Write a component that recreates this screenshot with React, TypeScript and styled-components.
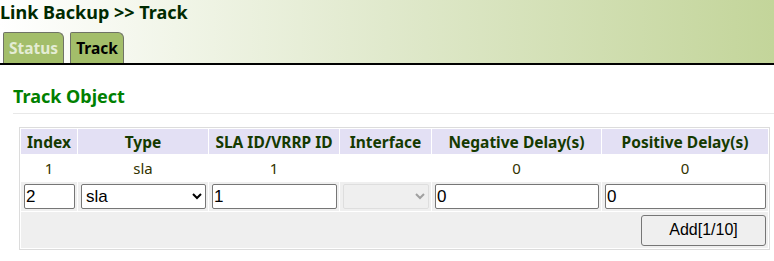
import styled, { createGlobalStyle } from 'styled-components';

const GlobalStyle = createGlobalStyle`
  body {
    margin: 0;
    background: #fff;
    font-family: 'Noto Sans', 'DejaVu Sans', sans-serif;
  }
`;

const columns = [
  { title: 'Index', width: 56 },
  { title: 'Type', width: 130 },
  { title: 'SLA ID/VRRP ID', width: 130 },
  { title: 'Interface', width: 91 },
  { title: 'Negative Delay(s)', width: 169 },
  { title: 'Positive Delay(s)', width: undefined },
];

const rows = [{ index: '1', type: 'sla', slaId: '1', iface: '', neg: '0', pos: '0' }];

const App = () => {
  return (
    <>
      <GlobalStyle />
      <Header>
        <PageTitle>Link Backup &gt;&gt; Track</PageTitle>
        <Tabs>
          <Tab>Status</Tab>
          <Tab active>Track</Tab>
        </Tabs>
      </Header>
      <Content>
        <SectionTitle>Track Object</SectionTitle>
        <Box>
          <Table>
            <colgroup>
              {columns.map((c) => (
                <col key={c.title} style={c.width ? { width: c.width } : undefined} />
              ))}
            </colgroup>
            <thead>
              <tr>
                {columns.map((c) => (
                  <Th key={c.title}>{c.title}</Th>
                ))}
              </tr>
            </thead>
            <tbody>
              {rows.map((r) => (
                <tr key={r.index}>
                  <Td>{r.index}</Td>
                  <Td>{r.type}</Td>
                  <Td>{r.slaId}</Td>
                  <Td>{r.iface}</Td>
                  <Td>{r.neg}</Td>
                  <Td>{r.pos}</Td>
                </tr>
              ))}
              <EditRow>
                <EditCell>
                  <TextInput defaultValue="2" />
                </EditCell>
                <EditCell>
                  <Select defaultValue="sla">
                    <option value="sla">sla</option>
                    <option value="vrrp">vrrp</option>
                  </Select>
                </EditCell>
                <EditCell>
                  <TextInput defaultValue="1" />
                </EditCell>
                <EditCell>
                  <Select disabled />
                </EditCell>
                <EditCell>
                  <TextInput defaultValue="0" />
                </EditCell>
                <EditCell>
                  <TextInput defaultValue="0" />
                </EditCell>
              </EditRow>
              <EditRow>
                <ButtonCell colSpan={6}>
                  <AddButton>Add[1/10]</AddButton>
                </ButtonCell>
              </EditRow>
            </tbody>
          </Table>
        </Box>
      </Content>
    </>
  );
};

const Header = styled.div`
  height: 63px;
  background: linear-gradient(to right, #ffffff 0%, #e0e9cc 50%, #c3d59a 100%);
  border-bottom: 2px solid #000;
  display: flex;
  flex-direction: column;
  justify-content: space-between;
`;
const PageTitle = styled.div`
  padding-top: 1px;
  font-size: 18px;
  font-weight: bold;
  color: #002a00;
  line-height: 22px;
`;
const Tabs = styled.div`
  display: flex;
  gap: 6px;
  padding-left: 3px;
`;
const Tab = styled.div<{ active?: boolean }>`
  height: 30px;
  padding: 0 5px;
  display: flex;
  align-items: center;
  background: #a3be6a;
  border: 1px solid #6f7366;
  border-bottom: none;
  border-top-right-radius: 6px;
  border-top-left-radius: 2px;
  font-size: 15.5px;
  font-weight: bold;
  color: ${(p) => (p.active ? '#000' : '#e4ecd4')};
`;
const Content = styled.div`
  padding: 19px 0 0 13px;
`;
const SectionTitle = styled.div`
  font-size: 18px;
  font-weight: bold;
  color: #008000;
  line-height: 24px;
  padding-bottom: 5px;
  border-bottom: 1px solid #e8e8e8;
`;
const Box = styled.div`
  margin: 13px 4px 0 6px;
  border: 1px solid #dcdcdc;
`;
const Table = styled.table`
  width: 100%;
  table-layout: fixed;
  border-collapse: separate;
  border-spacing: 1px;
`;
const Th = styled.th`
  height: 25px;
  padding: 0;
  background: #e3e0f4;
  color: #153a00;
  font-size: 15.5px;
  font-weight: bold;
  text-align: center;
`;
const Td = styled.td`
  height: 26px;
  padding: 0;
  color: #333300;
  font-size: 15px;
  text-align: center;
`;
const EditRow = styled.tr`
  background: #efefef;
`;
const EditCell = styled.td`
  padding: 2px 2px 2px 3px;
  height: 25px;
`;
const ButtonCell = styled.td`
  height: 36px;
  padding: 0 2px 0 0;
  text-align: right;
`;
const TextInput = styled.input`
  box-sizing: border-box;
  display: block;
  width: 100%;
  height: 25px;
  padding: 0 1px;
  border: 1px solid #767676;
  border-radius: 2px;
  font-family: 'Liberation Sans', Arial, sans-serif;
  font-size: 17px;
  color: #000;
`;
const Select = styled.select`
  box-sizing: border-box;
  display: block;
  width: 100%;
  height: 25px;
  border: 1px solid #767676;
  border-radius: 2px;
  background: #fff;
  font-family: 'Liberation Sans', Arial, sans-serif;
  font-size: 17px;
  &:disabled {
    background: #f0f0f0;
    border-color: #d8d8d8;
  }
`;
const AddButton = styled.button`
  width: 125px;
  height: 31px;
  border: 1px solid #767676;
  border-radius: 3px;
  background: #efefef;
  font-family: 'Liberation Sans', Arial, sans-serif;
  font-size: 16px;
  color: #000;
`;

export default App;
